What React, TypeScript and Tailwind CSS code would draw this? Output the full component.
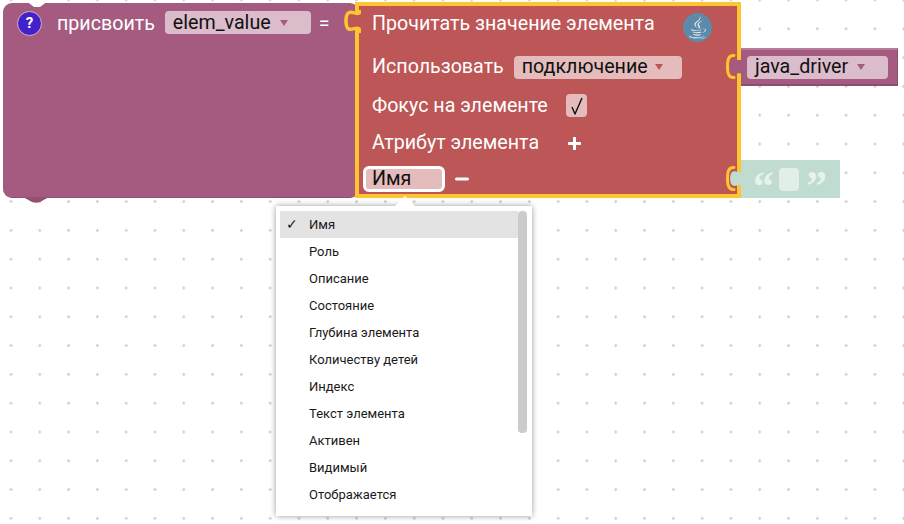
import React from "react";
import { FaJava } from "react-icons/fa";

const attributes = [
  "Имя",
  "Роль",
  "Описание",
  "Состояние",
  "Глубина элемента",
  "Количеству детей",
  "Индекс",
  "Текст элемента",
  "Активен",
  "Видимый",
  "Отображается",
];

// Blockly style puzzle tab, drawn pointing left
const PuzzleTab = ({ fill, stroke, className }: { fill: string; stroke: string; className: string }) => (
  <svg className={className} viewBox="0 0 18 28" fill="none">
    <path
      d="M17 2 c0 10 -14 -7 -14 11 s14 -1 14 12"
      fill={fill}
      stroke={stroke}
      strokeWidth="3.5"
      strokeLinejoin="round"
    />
  </svg>
);

// Output tab plugged into the yellow highlighted input
const PluggedTab = ({ fill, className }: { fill: string; className: string }) => (
  <svg className={className} viewBox="0 0 18 28" fill="none">
    <path d="M9 2.5 C3 2 2.5 8 2.5 13 C2.5 19 3 25 9 24.5" stroke="#ffc531" strokeWidth="3" strokeLinecap="round" />
    <path d="M18 6 C14 9 10 4.5 7 7 C4.5 9.5 4.5 17 7 20 C10 23 14 18 18 22 Z" fill={fill} />
  </svg>
);

const Arrow = ({ color }: { color: string }) => (
  <svg className="h-[8px] w-[10px]" viewBox="0 0 10 8">
    <path d="M1 1 H9 L5 7 Z" fill={color} />
  </svg>
);

const Dropdown = ({ label, bg, arrow, className }: { label: string; bg: string; arrow: string; className: string }) => (
  <div className={`flex h-[23px] items-center justify-between rounded-[4px] pl-2 text-[19.65px] text-[#111] ${bg} ${className}`}>
    <span>{label}</span>
    <Arrow color={arrow} />
  </div>
);

const App = () => {
  return (
    <div className="relative h-[524px] w-[904px] overflow-hidden bg-white bg-[radial-gradient(circle,#cfcfcf_1.2px,transparent_1.5px)] bg-[length:28.8px_28.8px] bg-[position:-3.4px_-14.4px] font-['Roboto',sans-serif] text-white">
      {/* variable block */}
      <div className="absolute left-[3px] top-[3px] flex h-[195px] w-[356px] items-start rounded-[9px] border-b border-[#8f4d6e] bg-[#a55b80] pl-[14px] pt-[8px]">
        <div className="flex h-[25px] w-[25px] items-center justify-center rounded-full border border-[#d3b2c6] bg-[#4420cb] text-[15px] font-bold">?</div>
        <span className="ml-[15px] flex h-[25px] items-center text-[19.65px]">присвоить</span>
        <Dropdown label="elem_value" bg="bg-[#dbbccb]" arrow="#a55b80" className="ml-[10px] w-[146px] pr-[22px]" />
        <span className="ml-2 flex h-[25px] items-center text-[19.65px]">=</span>
        {/* top notch */}
        <svg className="absolute left-[22px] top-[-3px] h-[8px] w-[24px]" viewBox="0 0 24 8">
          <path d="M0 0 L9 7 H15 L24 0 Z" fill="#fff" />
        </svg>
        {/* bottom notch */}
        <svg className="absolute bottom-[-6px] left-[20px] h-[6px] w-[26px]" viewBox="0 0 26 6">
          <path d="M0 0 L9 5 Q13 6.5 17 5 L26 0 Z" fill="#93506f" />
        </svg>
      </div>

      {/* read element value block */}
      <div className="absolute left-[355px] top-[2px] flex h-[196px] w-[386px] flex-col border-4 border-[#ffc531] bg-[#bd5656] pl-[13px] text-[19.65px]">
        <div className="flex h-[36px] shrink-0 items-center">
          <span>Прочитать значение элемента</span>
          <div className="ml-[28px] mt-[6px] flex h-[29px] w-[29px] items-center justify-center rounded-full bg-[#5d8aa8] text-[23px] text-[#e8eef2]">
            <FaJava />
          </div>
        </div>
        <div className="mt-[6px] flex h-[38px] shrink-0 items-center">
          <span>Использовать</span>
          <Dropdown label="подключение" bg="bg-[#e5bcbc]" arrow="#bd5656" className="ml-[10px] w-[168px] pr-[18px]" />
        </div>
        <div className="flex h-[38px] shrink-0 items-center">
          <span className="pt-[1px]">Фокус на элементе</span>
          <div className="ml-[18px] flex h-[23px] w-[21px] items-center justify-center rounded-[4px] bg-[#e5bcbc]">
            <svg className="h-[23px] w-[21px]" viewBox="0 0 21 23" fill="none">
              <path d="M6 13 L9 20 L16 4" stroke="#111" strokeWidth="1.4" strokeLinejoin="round" />
            </svg>
          </div>
        </div>
        <div className="mt-[1px] flex h-[36px] shrink-0 items-center">
          <span>Атрибут элемента</span>
          <svg className="ml-[29px] h-[13px] w-[13px]" viewBox="0 0 13 13">
            <path d="M6.5 1 V12 M1 6.5 H12" stroke="#fff" strokeWidth="3" strokeLinecap="round" />
          </svg>
        </div>
        <div className="ml-[-9px] flex h-[36px] shrink-0 items-center">
          <div className="flex h-[26px] w-[82px] items-center rounded-[6px] border-[3px] border-white bg-[#e5bcbc] pl-[6px] text-[#111]">Имя</div>
          <svg className="ml-[10px] h-[4px] w-[14px]" viewBox="0 0 14 4">
            <path d="M1.5 2 H12.5" stroke="#fff" strokeWidth="3" strokeLinecap="round" />
          </svg>
        </div>
      </div>
      <PuzzleTab fill="#bd5656" stroke="#ffc531" className="absolute left-[343px] top-[8px] h-[28px] w-[18px]" />

      {/* connection variable block */}
      <div className="absolute left-[741px] top-[48px] flex h-[38px] w-[157px] items-center border-y-2 border-r border-t-[#b87a99] border-b-[#8f4d6e] border-r-[#8f4d6e] bg-[#a55b80] pl-[6px]">
        <Dropdown label="java_driver" bg="bg-[#dbbccb]" arrow="#a55b80" className="w-[141px] pr-[22px]" />
      </div>
      <PluggedTab fill="#a55b80" className="absolute left-[725px] top-[53px] h-[28px] w-[18px]" />

      {/* empty string block */}
      <div className="absolute left-[741px] top-[160px] flex h-[38px] w-[99px] items-center bg-[#c0dcd0] pl-[12px] text-[#e8f2ed]">
        <span className="mt-[14px] font-['Liberation_Serif',serif] text-[42px] font-bold leading-[30px]">“</span>
        <div className="ml-[5px] h-[23px] w-[20px] rounded-[4px] bg-[#e2efe9]" />
        <span className="ml-[7px] mt-[14px] font-['Liberation_Serif',serif] text-[42px] font-bold leading-[30px]">”</span>
      </div>
      <PluggedTab fill="#c0dcd0" className="absolute left-[725px] top-[165px] h-[28px] w-[18px]" />

      {/* attribute menu */}
      <div className="absolute left-[276px] top-[206px] h-[310px] w-[256px] bg-white py-[5px] pl-1 pr-[5px] text-[13px] text-[#1a1a1a] shadow-[0_0_6px_rgba(0,0,0,0.4)]">
        <div className="absolute left-[122px] top-[-7px] h-[14px] w-[14px] rotate-45 bg-white" />
        <div className="relative flex">
          <ul className="w-[238px]">
            {attributes.map((name, i) => (
              <li key={name} className={`relative flex h-[27px] items-center pl-[29px] ${i === 0 ? "bg-[#e3e3e3]" : ""}`}>
                {i === 0 && <span className="absolute left-[6px] text-[14px]">✓</span>}
                {name}
              </li>
            ))}
          </ul>
          <div className="h-[222px] w-[9px] rounded-[4px] bg-[#cbcbcb]" />
        </div>
      </div>
    </div>
  );
};

export default App;
